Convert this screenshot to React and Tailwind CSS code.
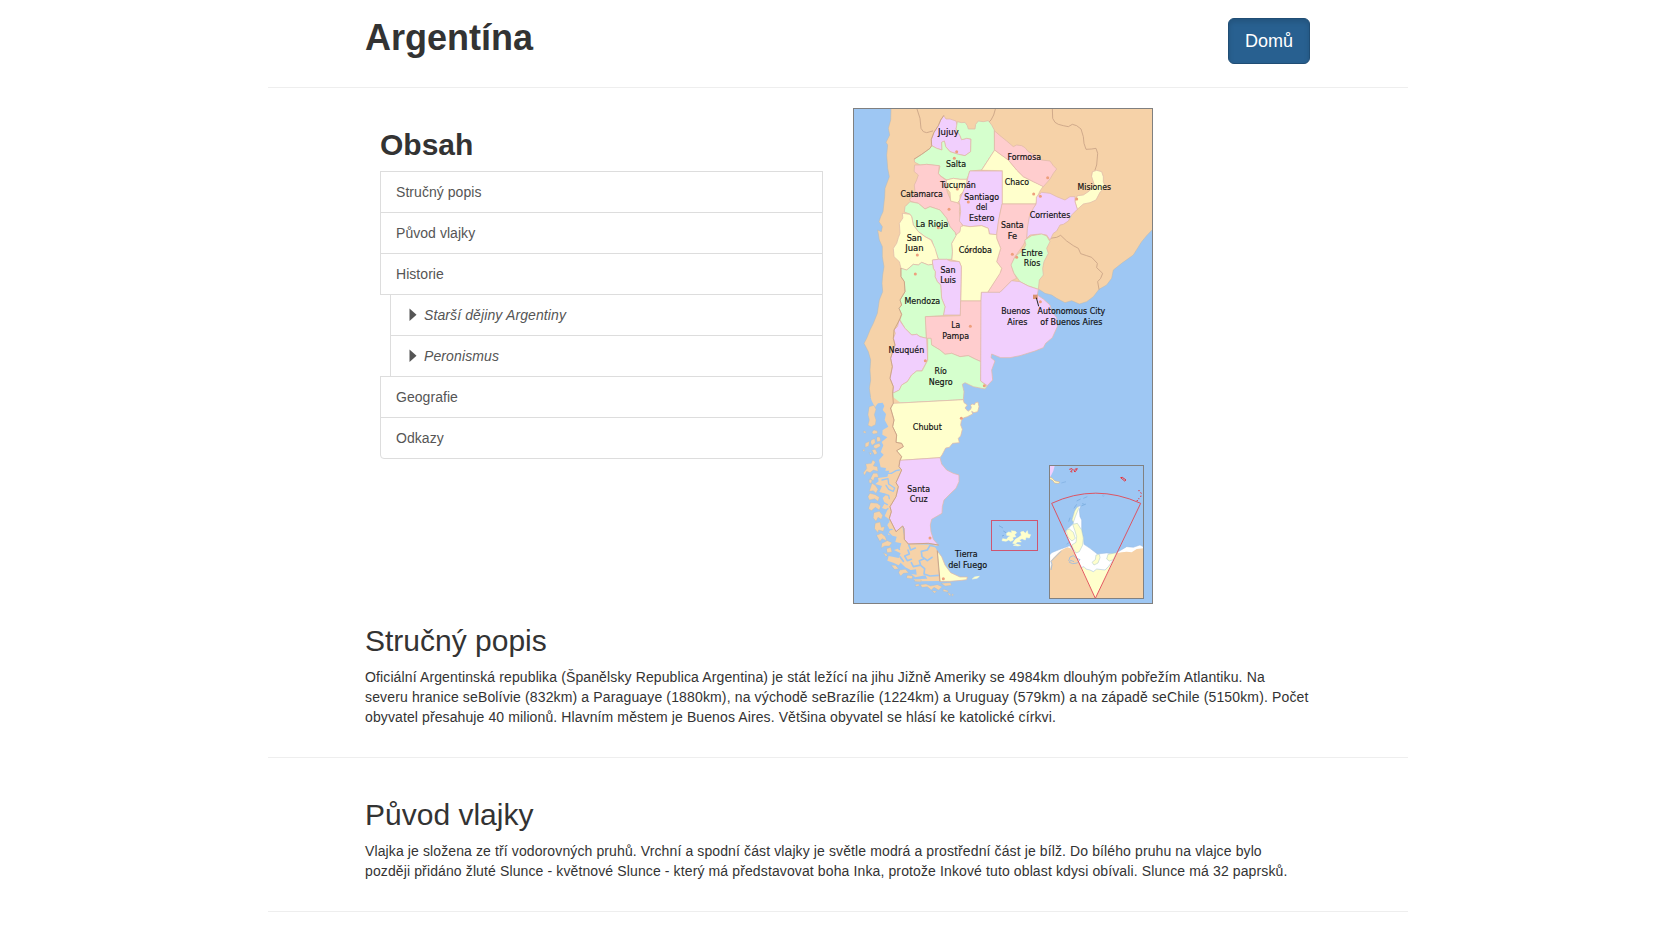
const LILAC = '#f1cffd';
const GREEN = '#d5ffcd';
const PINK = '#ffcdce';
const YELLOW = '#ffffcc';
const LAND = '#f6d2a8';
const SEA = '#9ec7f3';

const northernProvinces = [
  [LILAC, '244,103 252,82 265,62 272,45 281,32 288,42 300,42 318,48 322,62 318,72 330,92 335,104 350,100 363,102 362,140 345,152 325,148 300,140 287,125 283,108 275,112 276,135 260,130 245,122'],
  [GREEN, '193,162 215,148 240,130 245,122 260,130 276,135 275,112 283,108 287,125 300,140 325,148 345,152 362,140 363,102 350,100 335,104 330,92 318,72 322,50 335,53 345,52 352,62 355,72 375,72 377,58 385,48 400,50 415,47 425,60 433,75 434,135 395,195 360,198 355,212 350,223 330,223 310,220 290,225 280,218 270,212 265,205 270,183 230,178 210,180 195,172'],
  [PINK, '195,180 210,180 230,178 268,182 265,205 270,212 283,222 290,225 288,240 292,262 300,280 302,288 320,292 330,300 328,320 332,350 338,362 332,378 322,392 315,382 300,365 290,340 270,315 255,310 240,305 225,312 205,295 185,290 178,285 195,262 193,240 200,225 205,210 193,200'],
  [YELLOW, '290,225 310,220 330,223 350,223 352,235 340,260 330,270 330,285 322,293 302,288 300,262 290,250'],
  [LILAC, '360,198 457,198 457,297 450,325 442,375 440,389 418,387 415,370 395,362 360,365 340,362 328,348 332,320 330,300 327,290 335,270 350,235 355,212'],
  [YELLOW, '395,195 434,135 450,147 475,165 500,195 520,215 550,230 580,243 570,258 562,275 558,297 457,297 457,198'],
  [PINK, '434,78 450,92 470,108 490,125 500,120 515,122 525,128 535,140 555,150 575,165 600,168 610,182 620,192 610,205 600,222 580,245 550,230 520,215 500,195 475,165 450,147 434,135'],
  [YELLOW, '728,200 740,196 755,200 760,215 760,230 766,245 750,262 738,285 720,293 700,297 682,313 675,290 682,272 700,270 718,258 733,240 725,215'],
  [LILAC, '560,275 575,262 600,265 620,275 645,285 660,275 675,275 675,290 682,313 665,330 655,348 640,358 630,360 620,378 610,385 600,405 590,390 570,387 540,390 530,400 530,365 538,330 548,310 558,297'],
  [PINK, '457,297 558,297 550,310 538,335 532,370 530,400 520,420 495,455 484,480 490,500 500,520 485,527 450,562 413,562 452,500 455,490 440,470 452,430 440,400 440,389 445,350'],
  [GREEN, '525,405 545,392 575,387 590,393 600,410 590,430 595,445 582,470 578,490 580,510 568,525 565,553 535,543 510,530 492,505 483,480 495,455 520,435 527,420'],
  [YELLOW, '305,415 318,390 330,380 332,365 340,362 360,365 395,362 415,370 418,387 440,389 440,400 452,430 440,470 455,490 450,505 413,562 395,562 393,588 332,588 334,485 328,470 305,465 307,440'],
  [GREEN, '163,320 165,305 180,290 205,295 225,312 240,305 255,310 270,315 290,340 300,365 315,382 318,392 305,415 307,440 305,463 265,463 255,435 245,405 225,395 205,380 190,360 185,335 180,328'],
  [YELLOW, '158,325 180,328 185,335 190,360 205,380 225,395 243,405 255,430 265,463 248,465 248,478 235,480 215,472 205,480 190,478 170,495 153,490 148,470 132,455 130,430 140,415 145,398 150,385 148,355 158,340'],
  [LILAC, '248,465 265,463 290,463 300,468 328,470 334,485 331,630 280,630 285,605 275,580 272,540 262,530 255,515 256,500 250,490'],
  [GREEN, '153,490 170,495 190,478 205,480 215,472 235,480 248,478 250,490 256,500 255,515 262,530 272,540 275,580 285,605 280,632 227,635 230,700 210,695 200,688 185,690 165,670 150,645 155,628 147,610 155,600 150,585 165,560 163,530 153,515'],
  [PINK, '227,635 331,632 332,588 394,588 393,770 375,762 355,752 330,755 305,745 285,748 270,735 245,720 243,700 230,700'],
  [LILAC, '148,645 165,670 185,690 200,688 210,695 230,700 233,765 215,798 200,798 185,810 172,830 155,840 148,855 128,865 130,845 120,820 127,785 122,760 128,740 135,720 130,700 136,685 132,675 142,665'],
  [GREEN, '233,765 233,700 243,700 245,720 270,735 285,748 305,745 330,755 355,752 375,762 393,770 392,828 412,842 405,852 385,848 370,845 345,833 337,838 342,860 340,884 130,895 128,865 148,855 155,840 172,830 185,810 200,798 215,798'],
  [LILAC, '395,562 450,562 485,527 510,530 535,543 565,553 562,570 580,582 600,600 605,618 620,638 622,665 607,698 587,715 580,728 555,738 510,752 480,758 452,758 425,747 423,758 435,768 425,795 428,825 412,842 392,828 393,588'],
];

const southernProvinces = [
  [YELLOW, '130,880 340,869 342,878 352,885 345,894 354,904 362,898 364,892 362,886 366,882 374,884 376,878 384,876 387,890 383,905 372,908 365,904 368,912 352,920 340,924 334,932 332,945 337,958 332,978 325,985 328,998 308,1000 298,1012 287,1014 276,1035 270,1043 150,1051 155,1040 140,1022 160,1010 155,1000 138,997 140,975 128,950 132,930 122,895'],
  [LILAC, '150,1051 270,1043 275,1062 290,1080 310,1090 327,1095 327,1115 318,1135 300,1152 282,1170 277,1190 276,1210 262,1218 245,1228 241,1245 243,1265 250,1288 265,1305 235,1300 175,1302 163,1288 162,1256 158,1248 138,1265 128,1245 118,1225 124,1205 120,1190 138,1160 145,1130 138,1118 155,1080 147,1070'],
  [YELLOW, '262,1323 275,1340 285,1365 302,1388 330,1401 352,1401 350,1409 335,1411 300,1414 270,1414'],
];

const capitals = [
  [320, 140], [313, 160], [322, 252], [355, 291], [297, 313], [265, 368], [202, 450], [196, 507],
  [551, 267], [571, 274], [593, 218], [680, 282], [487, 448], [500, 457], [361, 664], [226, 767],
  [403, 842], [334, 940], [240, 1299], [280, 1421], [286, 525], [571, 590], [361, 435],
];

const labels = [
  ['Jujuy', 295, 91, 62], ['Salta', 318, 187, 60], ['Tucumán', 324, 249, 107], ['Catamarca', 215, 275, 127],
  ['Santiago', 395, 284, 104], ['del', 395, 315, 34], ['Estero', 395, 347, 76], ['La Rioja', 246, 365, 97],
  ['Formosa', 523, 165, 101], ['Chaco', 501, 240, 73], ['Misiones', 733, 256, 101], ['Corrientes', 600, 338, 122],
  ['Santa', 487, 370, 68], ['Fe', 487, 401, 28], ['San', 193, 407, 46], ['Juan', 193, 439, 55],
  ['Córdoba', 376, 444, 100], ['San', 294, 503, 45], ['Luis', 294, 535, 47], ['Entre', 546, 452, 64],
  ['Ríos', 546, 484, 50], ['Mendoza', 217, 596, 107], ['Buenos', 497, 627, 87], ['Aires', 502, 659, 60],
  ['Autonomous City', 664, 627, 203], ['of Buenos Aires', 664, 659, 186], ['La', 317, 669, 27],
  ['Pampa', 317, 702, 80], ['Neuquén', 169, 745, 107], ['Río', 272, 807, 37], ['Negro', 272, 839, 72],
  ['Chubut', 232, 974, 87], ['Santa', 206, 1160, 68], ['Cruz', 206, 1192, 54],
  ['Tierra', 349, 1357, 68], ['del Fuego', 353, 1388, 117],
];

function Provinces({ items }) {
  return (
    <g stroke="#dfb9a8" strokeWidth="2.2">
      {items.map(([fill, points], i) => (
        <polygon key={i} fill={fill} points={points} />
      ))}
    </g>
  );
}

function AntarcticInset() {
  return (
    <g transform="translate(390 1035)">
      <clipPath id="inset">
        <rect x="208" y="31" width="283" height="400" />
      </clipPath>
      <g clipPath="url(#inset)">
        <rect x="208" y="31" width="283" height="400" fill={SEA} />
        <path d="M209 32h15l-4 16-6 12-5 8z" fill={LILAC} />
        <path d="M209 66 217 70 225 78 239 81 236 85 224 84 218 76 209 72Z" fill={YELLOW} stroke="#e7a96f" strokeWidth="1.5" />
        <path d="M244 84l14-4" stroke="#7faedf" strokeWidth="2" />
        <path d="M209 300 215 293 240 283 262 275 268 272 275 280 280 288 268 262 258 240 255 232 262 222 270 215 280 205 277 190 283 170 293 155 302 152 298 165 300 185 305 195 305 230 310 245 312 268 330 280 352 297 380 294 400 296 412 292 425 284 440 275 460 277 480 270 490 275V430H209Z" fill="#fff" stroke="#9bbbe0" strokeWidth="1.5" />
        <path d="M209 345 215 325 212 318 220 308 235 293 245 285 262 277 272 280 285 296 346 430 412 294 425 292 440 290 455 292 470 282 491 280V431H209Z" fill={LAND} />
        <path d="M213 345l3-16-3-10 12-12 18-18M266 318l4-12 10-4 10 8 10 4-8 10-14 2-10-4 4-6 10 4" fill="none" stroke="#9bbbe0" strokeWidth="2.5" />
        <path d="M346 430 302 338 312 335 318 342 330 345 340 350 350 342 375 345 385 335 400 315 410 298Z" fill={YELLOW} />
        <path d="M302 338 312 335 318 342 330 345 340 350 350 342 375 345 385 335 400 315" fill="none" stroke="#9bbbe0" strokeWidth="1.5" />
        <path d="M278 208 292 205 305 225 310 250 308 270 298 290 288 294 280 282 275 270 288 262 290 245 285 228ZM258 226 268 222 280 232 286 250 276 258 264 246ZM276 195 284 168 292 155 296 160 286 185 280 202ZM348 300 358 298 360 308 354 324 342 330 336 322 346 314ZM384 298 410 293 400 314 388 318 380 312Z" fill={YELLOW} stroke="#a8c6c8" strokeWidth="1.5" />
        <path d="M266 200l4-12M282 160l8-12M290 138l12-6M310 130l12-5M318 147l-14 6M268 262l-8 6M314 148l-8-2" fill="none" stroke="#7caee0" strokeWidth="2.5" />
        <circle cx="370" cy="122" r="2.500" fill="none" stroke="#7caee0" />
        <path d="M215 145Q346 84 482 145L346 430Z" fill="none" stroke="#e14b58" strokeWidth="2.8" />
        <path d="M268 43l8-2 2 3-6 6 5 1M281 44l3 5M284 43l8-2-6 9-4-1M422 68l5-1 11 8-4 3zM475 107h4M482 112l2 4M483 122l-1 4M478 131h-3M470 137h4" fill="none" stroke="#e93139" strokeWidth="3" />
      </g>
      <rect x="208.500" y="31.500" width="282" height="399" fill="none" stroke="#818181" strokeWidth="3" />
    </g>
  );
}

function ArgentinaMap() {
  return (
    <svg className="block h-[496px] w-[300px]" viewBox="9 9 900 1488" role="img">
      <rect x="9" y="9" width="900" height="1488" fill={SEA} />
      <g strokeLinejoin="round" strokeLinecap="round">
        {/* Northern Chile, Bolivia, Paraguay, Brazil and Uruguay */}
        <path
          fill={LAND}
          stroke="#b3b9b8"
          strokeWidth="1.5"
          d="M123 9 122 45 115 70 119 90 108 112 113 120 110 150 113 190 118 215 105 250 104 275 99 320 92 335 87 350 97 365 94 380 83 375 88 405 97 425 97 455 102 485 98 510 96 535 98 560 88 585 82 625 70 655 60 675 50 700 42 715 55 740 62 765 60 795 62 825 58 850 62 878 66 884 130 886 300 840 340 760 390 560 565 553 570 555 585 565 605 570 620 580 645 593 665 587 688 597 710 590 730 575 747 553 770 540 785 520 790 495 815 475 850 450 875 410 890 392 909 372V9Z"
        />
        {/* Foreign borders */}
        <path fill="none" stroke="#c8a184" strokeWidth="2.5" d="M200 9 210 40 213 70 220 80 230 83 248 78M437 9 431 30 423 45 418 50M607 9 608 40 615 52 625 58 640 62 655 65 667 58 680 62 693 72 700 95 702 115 708 133 725 132 738 130 743 145 740 180 735 195M600 400 620 397 632 391 650 408 670 422 685 430 692 446 710 452 725 457 742 475 740 488 758 505 752 520 743 530 747 553" />
        <Provinces items={northernProvinces} />

        <g transform="translate(0 15)">
          {/* Southern Chile */}
          <path
            fill={LAND}
            d="M62 862 65 872 75 892 84 880 98 878 103 888 98 900 108 912 104 930 115 950 98 960 97 974 112 982 95 996 100 1006 92 1026 101 1034 87 1050 92 1072 108 1074 106 1082 118 1082 112 1100 84 1104 86 1114 76 1122 96 1128 88 1146 110 1152 98 1164 104 1180 96 1194 112 1200 104 1218 120 1230 112 1246 120 1260 114 1274 140 1280 136 1296 154 1300 150 1314 132 1320 152 1330 146 1344 116 1338 112 1352 130 1358 146 1366 152 1358 166 1372 182 1380 198 1378 200 1394 184 1392 196 1402 226 1396 232 1406 190 1408 200 1414 270 1413 262 1323 255 1310 265 1305 175 1302 165 1290 155 1240 160 1110 180 900 130 862Z"
          />
          {/* Islands */}
          <path
            fill={LAND}
            stroke="#b3b9b8"
            strokeWidth="1"
            d="M58 890 72 886 78 898 73 914 78 930 76 944 64 950 54 946 58 930 54 914ZM72 960l10 3 0 7-12 2-4-5zM42 963l6 2-2 5-6-3zM82 980l8 2 2 10-10 4-2-8zM64 990l10-4 2 12-10 8-4-8zM46 1000l12-6-2 14-10 4zM74 1004l14-4 4 8-14 8-8-4zM66 1020l10-2 6 12-8 4zM40 1018l4 1-1 5-4-1zM58 1028l6 1-2 6zM48 1062 64 1060 68 1050 76 1056 70 1068 82 1070 84 1084 70 1080 60 1088 50 1084 44 1096 40 1088 50 1076ZM70 1090l12 0 4 12-12 0-4 10-8-6zM58 1108l8 2-2 10-6-2zM66 1120 76 1126 84 1138 78 1150 70 1142 58 1144 62 1132ZM60 1150 76 1154 88 1162 84 1174 74 1166 58 1170 54 1160ZM62 1178 82 1180 92 1188 88 1200 76 1192 64 1202 56 1196ZM72 1208 88 1204 98 1216 94 1228 84 1222 78 1234 70 1224ZM76 1240 90 1236 94 1252 104 1250 100 1264 86 1260 84 1268 74 1256ZM80 1276 94 1270 106 1280 110 1292 96 1286 90 1294ZM96 1300 112 1292 126 1298 118 1308 104 1308 94 1314ZM110 1316 122 1312 126 1326 112 1328ZM112 1334 100 1328 108 1340ZM124 1366 136 1366 146 1376 134 1378ZM150 1380 166 1378 176 1388 160 1390 152 1398 146 1388ZM172 1396 188 1398 186 1406 170 1404ZM194 1410l20 0-2 5-18-1zM212 1424 228 1422 242 1428 262 1424 276 1430 266 1440 252 1432 244 1440 232 1430 216 1432ZM274 1420 302 1418 304 1426 286 1428ZM246 1442l14 2-6 5zM280 1438l14 4 0 4-14-2zM294 1448l6 3 2 6-5-2zM306 1452l5 2-4 4zM196 1424l10-2 2 5-10 2z"
          />
          {/* Fjords and the Strait of Magellan */}
          <g fill="none" stroke={SEA}>
            <path d="M82 886l10 16-6 20 6 26 8 8M110 1090l14 0 14-8 10-2M96 1110l18-4 2 16 18 12-4 10-14-6-8-12M92 1150l24 6 2 10M98 1176l14 8M100 1206l14-10M106 1224l10 12M112 1260l14-2M118 1270l12 14" strokeWidth="4" />
            <path d="M262 1311 240 1306 232 1320 214 1324 216 1340 232 1352 246 1342M222 1346 208 1352 212 1366 224 1376 222 1392 240 1398 266 1396M208 1366 190 1370 184 1358M174 1320 178 1332 164 1338 172 1352 184 1348M140 1302 148 1318M150 1340 160 1354M176 1304 182 1320 196 1314" strokeWidth="5" />
          </g>
          <Provinces items={southernProvinces} />
          <path d="M122 895 132 930 128 950 140 975 138 997 155 1000 160 1010 140 1022 155 1040 150 1051 147 1070 155 1080 138 1118 145 1130 138 1160 120 1190 124 1205 118 1225 128 1245 138 1265 158 1248 162 1256 163 1288 175 1302 235 1300 265 1305M262 1323 270 1413" fill="none" stroke="#c8a07f" strokeWidth="2.5" />
          <path d="M368 1406l6-5 14-2-6 5z" fill={YELLOW} stroke={YELLOW} strokeWidth="2" />
        </g>

        <path d="M193 162 215 148 240 130 245 122 244 103 252 82 265 62 272 45 281 32M153 490 153 515 163 530 165 560 150 585 155 600 147 610 155 628 148 645 132 675 130 700 135 720 128 740 122 760 127 785 120 820 130 845 128 865 130 895 122 910" fill="none" stroke="#c8a07f" strokeWidth="2.5" />
      </g>

      <g fill="#ee9f7c">
        {capitals.map(([x, y]) => (
          <circle key={`${x}-${y}`} cx={x} cy={y} r="4.5" />
        ))}
        <rect x="549" y="569" width="14" height="13" fill="#d9936f" />
      </g>
      <path d="M559 578 566 604" stroke="#222" strokeWidth="3" />

      <g transform="translate(0 15)">
        {/* Falkland Islands */}
        <path d="M447 1247l12 7M460 1263l8 5M462 1276l-6 2" stroke="#7faedf" strokeWidth="3" />
        <path d="M470 1270 476 1266 486 1268 484 1262 496 1264 500 1268 494 1274 498 1280 488 1282 490 1290 482 1294 476 1290 468 1294 456 1292 458 1286 470 1288 474 1282 482 1278 470 1276ZM512 1266 520 1264 526 1270 532 1262 534 1272 542 1274 538 1284 528 1282 526 1290 516 1286 508 1290 514 1296 502 1296 496 1302 488 1300 496 1288 506 1282 514 1276ZM490 1306 500 1302 512 1306 504 1308Z" fill={YELLOW} stroke={YELLOW} strokeWidth="1.5" />
        <rect x="424.500" y="1231.500" width="138" height="90" fill="none" stroke="#cf5570" strokeWidth="3" />
        <AntarcticInset />
      </g>

      <g fill="#111" stroke="#111" strokeWidth="0.5" fontFamily="'DejaVu Sans Condensed', 'DejaVu Sans', sans-serif" fontSize="27" textAnchor="middle">
        {labels.map(([text, x, y, width]) => (
          <text key={`${text}-${x}-${y}`} x={x} y={y} textLength={width} lengthAdjust="spacingAndGlyphs">
            {text}
          </text>
        ))}
      </g>
      <rect x="10.500" y="10.500" width="897" height="1485" fill="none" stroke="#808080" strokeWidth="3" />
    </svg>
  );
}

const contents = [
  { title: 'Stručný popis' },
  { title: 'Původ vlajky' },
  { title: 'Historie' },
  { title: 'Starší dějiny Argentiny', nested: true },
  { title: 'Peronismus', nested: true },
  { title: 'Geografie' },
  { title: 'Odkazy' },
];

function ContentsItem({ title, nested }) {
  if (nested) {
    return (
      <a href="#" className="-mb-px ml-2.5 flex h-[42px] items-center border border-[#ddd] px-[15px] tracking-[0.11px] italic">
        <svg className="mr-1 size-3.5" viewBox="0 0 14 14">
          <path d="M3.500 .5v12.500L10.500 6.700z" fill="#555" />
        </svg>
        {title}
      </a>
    );
  }
  return (
    <a href="#" className="-mb-px flex h-[42px] items-center border border-[#ddd] px-[15px] tracking-[0.05px] last:mb-0 last:rounded-b">
      {title}
    </a>
  );
}

function Section({ title, children }) {
  return (
    <section className="border-b border-[#eee] pr-[98px] pb-[30px] pl-[97px]">
      <h2 className="mb-2.5 text-[30px] leading-[33px]">{title}</h2>
      <p className="whitespace-nowrap">{children}</p>
    </section>
  );
}

export default function App() {
  return (
    <div className="h-[940px] overflow-hidden bg-white pl-[268px] font-['Liberation_Sans',Arial,sans-serif] text-sm leading-5 text-[#333]">
      <div className="w-[1140px]">
        <header className="flex h-[88px] items-start justify-between border-b border-[#eee] pt-[18px] pr-[98px] pl-[97px]">
          <h1 className="text-4xl leading-[39.6px] font-bold">Argentína</h1>
          <a
            href="#"
            className="flex h-[46px] w-[82px] items-center justify-center rounded-md border border-[#204d74] bg-[#286090] text-lg text-white shadow-[inset_0_3px_5px_rgba(0,0,0,0.125)]"
          >
            Domů
          </a>
        </header>

        <div className="flex items-start pt-5 pb-5 pl-28">
          <nav className="mr-[30px] w-[443px] pt-5 text-[#555]">
            <h2 className="mb-2.5 text-[30px] leading-[33px] font-bold text-[#333]">Obsah</h2>
            <div className="flex flex-col">
              {contents.map((item) => (
                <ContentsItem key={item.title} {...item} />
              ))}
            </div>
          </nav>
          <ArgentinaMap />
        </div>

        <Section title="Stručný popis">
          <span className="block tracking-[0.123px]">
            Oficiální Argentinská republika (Španělsky Republica Argentina) je stát ležící na jihu Jižně Ameriky se
            4984km dlouhým pobřežím Atlantiku. Na
          </span>
          <span className="block tracking-[0.143px]">
            severu hranice seBolívie (832km) a Paraguaye (1880km), na východě seBrazílie (1224km) a Uruguay (579km) a na
            západě seChile (5150km). Počet
          </span>
          <span className="block tracking-[0.106px]">
            obyvatel přesahuje 40 milionů. Hlavním městem je Buenos Aires. Většina obyvatel se hlásí ke katolické církvi.
          </span>
        </Section>
        <div className="pt-10">
          <Section title="Původ vlajky">
            <span className="block tracking-[0.113px]">
              Vlajka je složena ze tří vodorovných pruhů. Vrchní a spodní část vlajky je světle modrá a prostřední část
              je bílž. Do bílého pruhu na vlajce bylo
            </span>
            <span className="block tracking-[0.12px]">
              později přidáno žluté Slunce - květnové Slunce - který má představovat boha Inka, protože Inkové tuto
              oblast kdysi obívali. Slunce má 32 paprsků.
            </span>
          </Section>
        </div>
      </div>
    </div>
  );
}
